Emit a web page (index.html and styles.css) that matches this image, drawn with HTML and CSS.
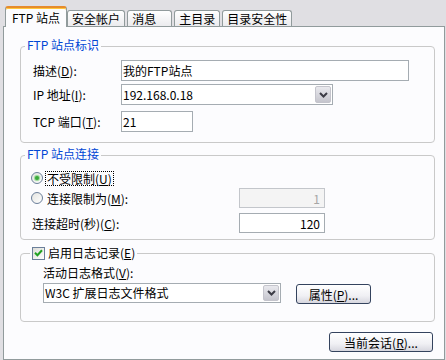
FILE: index.html
```html
<!DOCTYPE html>
<html lang="zh-CN">
<head>
  <meta charset="UTF-8" />
  <title>FTP 站点属性</title>
  <link rel="stylesheet" href="styles.css">
</head>
<body>
  <div class="tabs">
    <div class="tab tab-active">FTP 站点</div>
    <div class="tab">安全帐户</div>
    <div class="tab tab-msg">消息</div>
    <div class="tab">主目录</div>
    <div class="tab">目录安全性</div>
  </div>

  <div class="panel">
    <fieldset class="group group-site">
      <legend>FTP 站点标识</legend>
      <div class="site-body">
        <div class="row">
          <label class="site-label">描述(<u>D</u>):</label>
          <input class="field field-desc" type="text" value="我的FTP站点">
        </div>
        <div class="row row-ip">
          <label class="site-label">IP 地址(<u>I</u>):</label>
          <div class="combo combo-ip">
            <span class="combo-text">192.168.0.18</span>
            <span class="combo-btn">
              <svg width="9" height="6" viewBox="0 0 9 6"><path d="M1 1 L4.5 4.5 L8 1" stroke="#3c3c46" stroke-width="2" fill="none"/></svg>
            </span>
          </div>
        </div>
        <div class="row row-port">
          <label class="site-label">TCP 端口(<u>T</u>):</label>
          <input class="field field-port" type="text" value="21">
        </div>
      </div>
    </fieldset>

    <fieldset class="group group-conn">
      <legend>FTP 站点连接</legend>
      <div class="conn-body">
        <div class="conn-row">
          <span class="radio radio-on"></span>
          <span class="opt-text opt-focus">不受限制(<u>U</u>)</span>
        </div>
        <div class="conn-row">
          <div class="conn-label">
            <span class="radio"></span>
            <span class="opt-text">连接限制为(<u>M</u>):</span>
          </div>
          <input class="field field-num" type="text" value="1" disabled>
        </div>
        <div class="conn-row conn-timeout">
          <label class="conn-label">连接超时(秒)(<u>C</u>):</label>
          <input class="field field-num" type="text" value="120">
        </div>
      </div>
    </fieldset>

    <fieldset class="group group-log">
      <legend class="legend-check">
        <span class="check">
          <svg width="9" height="8" viewBox="0 0 9 8"><path d="M1 3.8 L3.4 6.2 L8 1.2" stroke="#21a121" stroke-width="2" fill="none"/></svg>
        </span>
        <span>启用日志记录(<u>E</u>)</span>
      </legend>
      <div class="log-body">
        <div class="log-label">活动日志格式(<u>V</u>):</div>
        <div class="log-row">
          <div class="combo combo-log">
            <span class="combo-text">W3C 扩展日志文件格式</span>
            <span class="combo-btn">
              <svg width="9" height="6" viewBox="0 0 9 6"><path d="M1 1 L4.5 4.5 L8 1" stroke="#3c3c46" stroke-width="2" fill="none"/></svg>
            </span>
          </div>
          <button class="btn btn-props">属性(<u>P</u>)...</button>
        </div>
      </div>
    </fieldset>

    <div class="actions">
      <button class="btn btn-session">当前会话(<u>R</u>)...</button>
    </div>
  </div>
</body>
</html>
```

FILE: styles.css
```css
body {
  margin: 0;
  width: 446px;
  height: 360px;
  overflow: hidden;
  background: #e0dfe3;
  font-family: "Noto Sans CJK SC", sans-serif;
  font-size: 12px;
  color: #000;
}

u {
  text-decoration: underline;
  text-underline-offset: 1px;
}

/* tab strip */
.tabs {
  display: flex;
  align-items: flex-end;
  height: 26px;
  padding-left: 5px;
}

.tab {
  box-sizing: border-box;
  height: 16px;
  margin-left: 2px;
  padding: 0 4px;
  border: 1px solid #919b9c;
  border-bottom: none;
  border-radius: 3px 3px 0 0;
  background: linear-gradient(#ffffff, #ebebee);
  line-height: 15px;
  white-space: nowrap;
}

.tab-active {
  position: relative;
  z-index: 1;
  height: 21px;
  min-width: 62px;
  margin: 0 0 -1px 0;
  padding: 0 6px;
  border-top: 2px solid #e68b2c;
  box-shadow: inset 0 1px 0 #ffc73c;
  background: #fcfcfe;
  line-height: 19px;
  text-align: center;
}

.tab-active + .tab {
  margin-left: 0;
}

.tab-msg {
  min-width: 45px;
}

/* page */
.panel {
  box-sizing: border-box;
  height: 334px;
  margin: 0 1px 0 3px;
  padding: 11px 9px 0 16px;
  border: 1px solid #919b9c;
  background: #fcfcfe;
}

.group {
  margin: 0;
  padding: 0;
  min-width: 0;
  border: 1px solid #c9c9c9;
  border-radius: 4px;
}

.group legend {
  margin-left: 4px;
  padding: 0 2px 2px;
  line-height: 14px;
  color: #0046d5;
}

.group-conn,
.group-log {
  margin-top: 4px;
}

.row {
  display: flex;
  align-items: center;
}

.field {
  box-sizing: border-box;
  height: 21px;
  margin: 0;
  padding: 0 1px;
  border: 1px solid #a5acb2;
  background: #fff;
  font: inherit;
  color: #000;
  outline: none;
}

/* site identification */
.site-body {
  padding: 6px 0 10px 12px;
}

.site-label {
  width: 88px;
}

.row-ip {
  margin-top: 3px;
}

.row-port {
  margin-top: 6px;
}

.field-desc {
  width: 288px;
}

.field-port {
  width: 72px;
}

.combo {
  box-sizing: border-box;
  display: flex;
  align-items: stretch;
  height: 21px;
  border: 1px solid #a5acb2;
  background: #fff;
}

.combo-text {
  flex: 1;
  padding-left: 1px;
  line-height: 19px;
}

.combo-btn {
  box-sizing: border-box;
  display: flex;
  align-items: center;
  justify-content: center;
  width: 16px;
  margin: 1px;
  border: 1px solid #c4c4cc;
  border-radius: 2px;
  background: linear-gradient(#e9e9ee, #c5c5cd);
}

.combo-ip {
  width: 212px;
}

/* connections */
.conn-body {
  padding: 5px 0 6px 11px;
}

.conn-row {
  display: flex;
  align-items: center;
  height: 20px;
}

.conn-timeout {
  margin-top: 5px;
}

.conn-label {
  display: flex;
  align-items: center;
  width: 207px;
}

.radio {
  box-sizing: border-box;
  display: grid;
  place-items: center;
  width: 12px;
  height: 12px;
  margin: 0 2px 0 -1px;
  border: 1px solid #6b7f9a;
  border-radius: 50%;
  background: linear-gradient(135deg, #e4e4e0, #ffffff);
}

.radio-on::after {
  content: "";
  width: 4px;
  height: 4px;
  border-radius: 50%;
  background: #3aa83a;
  box-shadow: 0 0 1px 1px #8fd68f;
}

.opt-text {
  padding: 0 1px;
  border: 1px solid transparent;
  line-height: 13px;
}

.opt-focus {
  border: 1px dotted #000;
}

.field-num {
  width: 86px;
  height: 20px;
  padding-right: 4px;
  text-align: right;
}

.field-num:disabled {
  background: #f4f4f4;
  border-color: #c3c6cb;
  color: #a6a6a6;
}

/* logging */
.group .legend-check {
  display: flex;
  align-items: center;
  margin-left: 9px;
  padding: 2px 2px;
  color: #000;
}

.check {
  box-sizing: border-box;
  display: flex;
  align-items: center;
  justify-content: center;
  width: 13px;
  height: 13px;
  margin-right: 3px;
  border: 1px solid #6b7f9a;
  background: linear-gradient(135deg, #dcdcd8, #ffffff);
}

.log-body {
  padding: 3px 0 17px 22px;
}

.log-label {
  line-height: 16px;
}

.log-row {
  display: flex;
  align-items: flex-start;
  margin-top: 2px;
}

.combo-log {
  width: 238px;
  height: 20px;
}

.combo-log .combo-text {
  line-height: 18px;
}

.btn {
  box-sizing: border-box;
  height: 20px;
  margin: 0;
  padding: 0;
  border: 1px solid #34435e;
  border-radius: 3px;
  background: linear-gradient(#ffffff, #f0f0f4 60%, #d7d7df);
  font: inherit;
  color: #000;
  line-height: 17px;
}

.btn-props {
  width: 75px;
  margin: 1px 0 0 15px;
}

.actions {
  display: flex;
  justify-content: flex-end;
  margin-top: 10px;
  padding-right: 2px;
}

.btn-session {
  width: 104px;
}
```
